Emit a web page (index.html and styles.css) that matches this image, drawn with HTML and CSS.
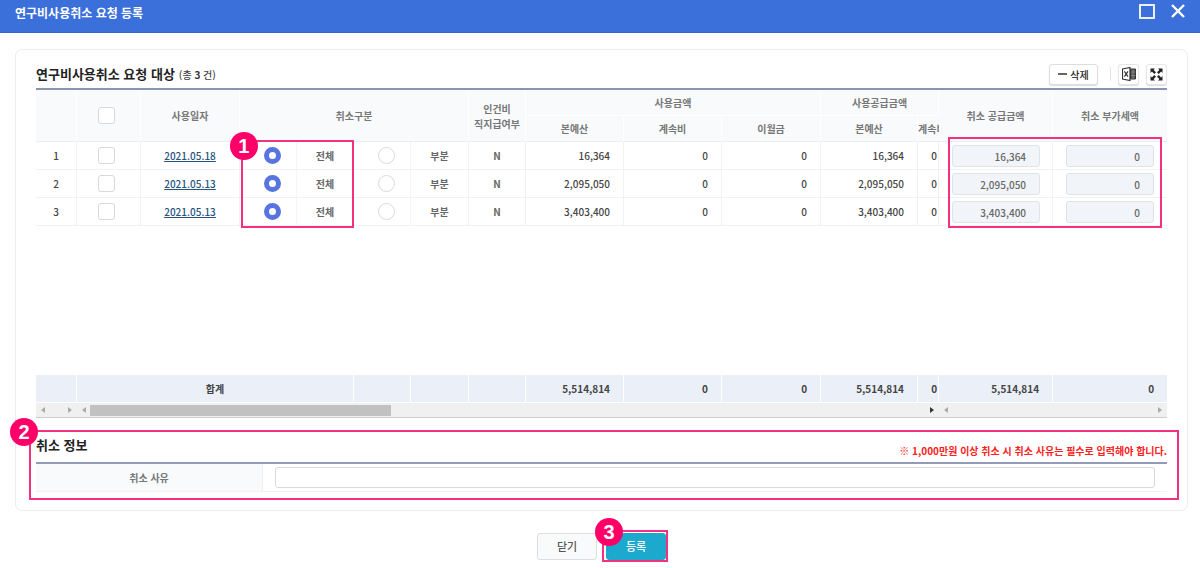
FILE: index.html
```html
<!DOCTYPE html>
<html lang="ko">
<head>
<meta charset="utf-8">
<title>연구비사용취소 요청 등록</title>
<link rel="stylesheet" href="styles.css">
</head>
<body>
<header class="titlebar">
  <h1 class="titlebar-title">연구비사용취소 요청 등록</h1>
  <div class="titlebar-actions">
    <button class="window-btn" type="button" aria-label="최대화"><svg width="16" height="16" viewBox="0 0 16 16"><rect x="1" y="2" width="14" height="13" fill="none" stroke="#fff" stroke-width="1.800"/></svg></button>
    <button class="window-btn" type="button" aria-label="창 닫기"><svg width="16" height="16" viewBox="0 0 16 16"><path d="M2 2L14 14M14 2L2 14" stroke="#fff" stroke-width="2.400"/></svg></button>
  </div>
</header>
<main>
  <div class="panel">
    <section>
      <div class="section-head">
        <h2 class="section-title">연구비사용취소 요청 대상</h2>
        <span class="count">(총 <b>3</b> 건)</span>
        <div class="tools">
          <button class="tool tool-delete" type="button"><span class="minus"></span>삭제</button>
          <span class="divider"></span>
          <button class="tool tool-icon" type="button" aria-label="엑셀"><svg width="14" height="14" viewBox="0 0 14 14"><path d="M0.5 2L8 0.5V13.5L0.5 12Z" fill="#fff" stroke="#333" stroke-width="1.2"/><path d="M2.4 4.4L6 9.6M6 4.4L2.4 9.6" stroke="#333" stroke-width="1.2"/><path d="M8.5 2H13.5V12H8.5Z" fill="#555" stroke="#333"/><path d="M11 2V12M9 5H13.5M9 8.5H13.5" stroke="#999" stroke-width=".6"/></svg></button>
          <button class="tool tool-icon" type="button" aria-label="전체화면"><svg width="13" height="13" viewBox="0 0 13 13" fill="#222"><path d="M.5.5H5L3.600 1.900 6 4.300 4.300 6 1.900 3.600.5 5ZM12.500.5V5L11.100 3.600 8.700 6 7 4.300 9.400 1.900 8 .5ZM.5 12.500V8L1.900 9.400 4.300 7 6 8.700 3.600 11.100 5 12.500ZM12.500 12.500H8L9.400 11.100 7 8.700 8.700 7 11.100 9.400 12.500 8Z"/></svg></button>
        </div>
      </div>
      <div class="grid-wrap">
        <table class="grid">
          <colgroup>
            <col class="w41"><col class="w64"><col class="w99"><col class="w57"><col class="w57"><col class="w57"><col class="w58"><col class="w57"><col class="w98"><col class="w98"><col class="w99"><col class="w97"><col class="w21"><col class="w114"><col class="w114">
          </colgroup>
          <thead>
            <tr>
              <th rowspan="2"></th>
              <th rowspan="2" class="check-cell"><input class="check" type="checkbox" aria-label="전체 선택"></th>
              <th rowspan="2">사용일자</th>
              <th rowspan="2" colspan="4">취소구분</th>
              <th rowspan="2">인건비<br>직지급여부</th>
              <th colspan="3" class="group">사용금액</th>
              <th colspan="2" class="group">사용공급금액</th>
              <th rowspan="2">취소 공급금액</th>
              <th rowspan="2">취소 부가세액</th>
            </tr>
            <tr>
              <th>본예산</th><th>계속비</th><th>이월금</th><th>본예산</th><th class="clipped">계속비</th>
            </tr>
          </thead>
          <tbody>
            <tr>
              <td>1</td>
              <td class="check-cell"><input class="check" type="checkbox" aria-label="1행 선택"></td>
              <td><a class="date" href="#">2021.05.18</a></td>
              <td class="radio-cell"><input class="radio" type="radio" name="r1" id="r1a" checked></td>
              <td class="option"><label for="r1a">전체</label></td>
              <td class="radio-cell"><input class="radio" type="radio" name="r1" id="r1b"></td>
              <td class="option"><label for="r1b">부분</label></td>
              <td class="option">N</td>
              <td class="num">16,364</td><td class="num">0</td><td class="num">0</td><td class="num">16,364</td><td class="num tight">0</td>
              <td class="field-cell"><input class="amount" type="text" value="16,364" readonly aria-label="취소 공급금액"></td>
              <td class="field-cell"><input class="amount" type="text" value="0" readonly aria-label="취소 부가세액"></td>
            </tr>
            <tr>
              <td>2</td>
              <td class="check-cell"><input class="check" type="checkbox" aria-label="2행 선택"></td>
              <td><a class="date" href="#">2021.05.13</a></td>
              <td class="radio-cell"><input class="radio" type="radio" name="r2" id="r2a" checked></td>
              <td class="option"><label for="r2a">전체</label></td>
              <td class="radio-cell"><input class="radio" type="radio" name="r2" id="r2b"></td>
              <td class="option"><label for="r2b">부분</label></td>
              <td class="option">N</td>
              <td class="num">2,095,050</td><td class="num">0</td><td class="num">0</td><td class="num">2,095,050</td><td class="num tight">0</td>
              <td class="field-cell"><input class="amount" type="text" value="2,095,050" readonly aria-label="취소 공급금액"></td>
              <td class="field-cell"><input class="amount" type="text" value="0" readonly aria-label="취소 부가세액"></td>
            </tr>
            <tr>
              <td>3</td>
              <td class="check-cell"><input class="check" type="checkbox" aria-label="3행 선택"></td>
              <td><a class="date" href="#">2021.05.13</a></td>
              <td class="radio-cell"><input class="radio" type="radio" name="r3" id="r3a" checked></td>
              <td class="option"><label for="r3a">전체</label></td>
              <td class="radio-cell"><input class="radio" type="radio" name="r3" id="r3b"></td>
              <td class="option"><label for="r3b">부분</label></td>
              <td class="option">N</td>
              <td class="num">3,403,400</td><td class="num">0</td><td class="num">0</td><td class="num">3,403,400</td><td class="num tight">0</td>
              <td class="field-cell"><input class="amount" type="text" value="3,403,400" readonly aria-label="취소 공급금액"></td>
              <td class="field-cell"><input class="amount" type="text" value="0" readonly aria-label="취소 부가세액"></td>
            </tr>
            <tr class="filler"><td colspan="15"></td></tr>
          </tbody>
          <tfoot>
            <tr>
              <td></td><td colspan="4">합계</td><td></td><td></td><td></td>
              <td class="num">5,514,814</td><td class="num">0</td><td class="num">0</td><td class="num">5,514,814</td><td class="num tight">0</td><td class="num">5,514,814</td><td class="num">0</td>
            </tr>
          </tfoot>
        </table>
        <div class="scrollbars">
          <div class="scrollbar"><span class="arrow left"></span><span class="arrow right"></span></div>
          <div class="scrollbar"><span class="arrow left"></span><div class="track"><div class="thumb"></div></div><span class="arrow right active"></span></div>
          <div class="scrollbar"><span class="arrow left"></span><span class="arrow right"></span></div>
        </div>
        <div class="mark mark-type"><span class="badge">1</span></div>
        <div class="mark mark-amount"></div>
      </div>
    </section>
    <section class="info">
      <div class="section-head info-head">
        <h2 class="section-title">취소 정보</h2>
        <p class="notice">※ 1,000만원 이상 취소 시 취소 사유는 필수로 입력해야 합니다.</p>
      </div>
      <div class="form-row">
        <label class="form-label" for="reason">취소 사유</label>
        <div class="form-field"><input class="reason" id="reason" type="text"></div>
      </div>
      <div class="mark mark-info"><span class="badge">2</span></div>
    </section>
  </div>
  <div class="actions">
    <button class="btn" type="button">닫기</button>
    <div class="submit">
      <button class="btn btn-primary" type="button">등록</button>
      <div class="mark mark-submit"><span class="badge">3</span></div>
    </div>
  </div>
</main>
</body>
</html>
```
FILE: styles.css
```css
* { box-sizing: border-box; }
body {
  margin: 0;
  background: #fff;
  color: #444;
  font-family: "Noto Sans CJK KR", sans-serif;
  font-size: 10px;
  line-height: 15px;
  font-weight: 500;
}
button, input { font: inherit; color: inherit; margin: 0; padding: 0; }
h1, h2, p { margin: 0; }

.titlebar {
  display: flex;
  justify-content: space-between;
  align-items: flex-start;
  height: 33px;
  padding: 3px 14px 0 15px;
  background: #3b70db;
  border-bottom: 1px solid #3566cf;
  color: #fff;
}
.titlebar-title { font-size: 12px; line-height: 20px; font-weight: 700; }
.titlebar-actions { display: flex; gap: 15px; }
.window-btn { width: 16px; height: 16px; border: 0; background: none; }
.window-btn svg { display: block; }

.panel {
  margin: 16px 12px 0 15px;
  padding: 13px 20px 18px;
  border: 1px solid #ececec;
  border-radius: 7px;
}
.section-head { display: flex; align-items: center; height: 25px; padding-bottom: 3px; }
.section-title { color: #222; font-size: 13px; line-height: 20px; font-weight: 700; }
.count { margin-left: 4px; }
.count b { color: #333; }
.tools { display: flex; align-items: center; margin-left: auto; }
.tool {
  display: flex;
  align-items: center;
  justify-content: center;
  height: 21px;
  background: #fff;
  border: 1px solid #ddd;
  border-radius: 3px;
  box-shadow: 0 1px 1px #ddd;
  color: #222;
}
.tool-delete { width: 49px; gap: 3px; }
.tool-icon { width: 21px; border-color: #e6e6e6; }
.tool-icon + .tool-icon { margin-left: 7px; }
.minus { width: 9px; height: 2px; background: #666; }
.divider { width: 1px; height: 14px; margin: 0 7px 0 12px; background: #e5e5e5; }

.grid-wrap { position: relative; }
.grid {
  width: 100%;
  table-layout: fixed;
  border-collapse: separate;
  border-spacing: 0;
  border-top: 2px solid #8b93ae;
}
.w21 { width: 21px; } .w41 { width: 41px; } .w57 { width: 57px; } .w58 { width: 58px; }
.w64 { width: 64px; } .w97 { width: 97px; } .w98 { width: 98px; } .w99 { width: 99px; }
.w114 { width: 114px; }
.grid th, .grid td {
  height: 28px;
  padding: 0;
  text-align: center;
  vertical-align: middle;
  border-right: 1px solid #f2f2f2;
  border-bottom: 1px solid #f2f2f2;
}
.grid th {
  height: 26px;
  background: #f8fafc;
  color: #777;
  font-weight: 700;
  border-right-color: #fff;
  border-bottom-color: #eceef1;
}
.grid th.group { border-bottom-color: #fff; }
.grid th.clipped { overflow: hidden; white-space: nowrap; text-align: left; }
.grid .check-cell { padding-right: 4px; }
.grid .radio-cell { padding-left: 8px; border-right-color: #f5f5f5; }
.grid .option { color: #666; font-weight: 700; }
.grid .num { padding-right: 13px; text-align: right; }
.grid .tight { padding-right: 1px; }
.grid .field-cell { padding: 0 12px 0 13px; }
.grid th:last-child, .grid td:last-child { border-right: 0; }
.grid .field-cell:last-child, .grid .num:last-child { padding-right: 13px; }
.grid .filler td { height: 149px; border: 0; }
.grid tfoot td {
  height: 28px;
  background: #ebf0f8;
  color: #444;
  font-weight: 700;
  border-color: #fff;
}
.check, .radio {
  appearance: none;
  display: block;
  width: 17px;
  height: 17px;
  margin: 0 auto;
  background: #fff;
  border: 1px solid #d9d9d9;
  border-radius: 3px;
}
.radio { border-radius: 50%; }
.radio:checked { border: 5px solid #5774e1; }
.date { color: #26547f; text-decoration: underline; }
.amount {
  display: block;
  width: 100%;
  height: 22px;
  padding: 2px 13px 0 0;
  text-align: right;
  background: #f1f4f9;
  border: 1px solid #dfe3e8;
  border-radius: 3px;
  color: #666;
}

.scrollbars { display: grid; grid-template-columns: 41fr 862fr 228fr; border-bottom: 1px solid #ccc; }
.scrollbar {
  display: flex;
  align-items: center;
  justify-content: space-between;
  height: 14px;
  padding: 0 5px;
  background: #f0f0f0;
}
.arrow { border: 3px solid transparent; }
.arrow.left { border-left-width: 0; border-right: 4px solid #aaa; }
.arrow.right { border-right-width: 0; border-left: 4px solid #aaa; }
.arrow.active { border-left-color: #333; }
.track { flex: 1; margin: 0 4px; }
.thumb { width: 36%; height: 11px; background: #c1c1c1; }

.info { position: relative; }
.info-head { height: 44px; padding: 0; justify-content: space-between; align-items: flex-end; }
.info-head .section-title { padding-bottom: 7px; }
.info-head .notice { padding-bottom: 4px; color: #ff2020; font-weight: 700; }
.form-row {
  display: grid;
  grid-template-columns: 227fr 904fr;
  border-top: 2px solid #949bb8;
  border-bottom: 1px solid #f2f2f2;
}
.form-label {
  display: flex;
  align-items: center;
  justify-content: center;
  background: #f8fafc;
  border-right: 1px solid #eee;
  color: #777;
  font-weight: 700;
}
.form-field { padding: 3px 12px; }
.reason {
  display: block;
  width: 100%;
  height: 21px;
  padding: 0 8px;
  border: 1px solid #d9d9d9;
  border-radius: 3px;
}

.actions { display: flex; justify-content: center; gap: 9px; padding: 22px 0 8px 3px; }
.btn {
  display: block;
  width: 60px;
  height: 27px;
  border: 1px solid #ddd;
  border-radius: 3px;
  background: #f8fafc;
  color: #555;
  font-size: 11px;
}
.btn-primary { background: #1da9cd; border-color: #1da9cd; color: #fff; }
.submit { position: relative; }

.mark { position: absolute; border: 2px solid #f43180; pointer-events: none; }
.mark-type { top: 52px; left: 18.1%; width: 10%; height: 88px; }
.mark-amount { top: 49px; left: 80.6%; right: 5px; height: 91px; }
.mark-info { inset: 12px -12px -8px -7px; }
.mark-submit { inset: -3px -2px -2px -4px; }
.badge {
  position: absolute;
  top: -10px;
  left: -13px;
  width: 28px;
  height: 28px;
  border-radius: 50%;
  background: #ff0068;
  color: #fff;
  font: bold 20px/28px "Liberation Sans", sans-serif;
  text-align: center;
}
.mark-info .badge, .mark-submit .badge { top: -14px; left: -21px; }
.mark-submit .badge { left: -9px; }
```
